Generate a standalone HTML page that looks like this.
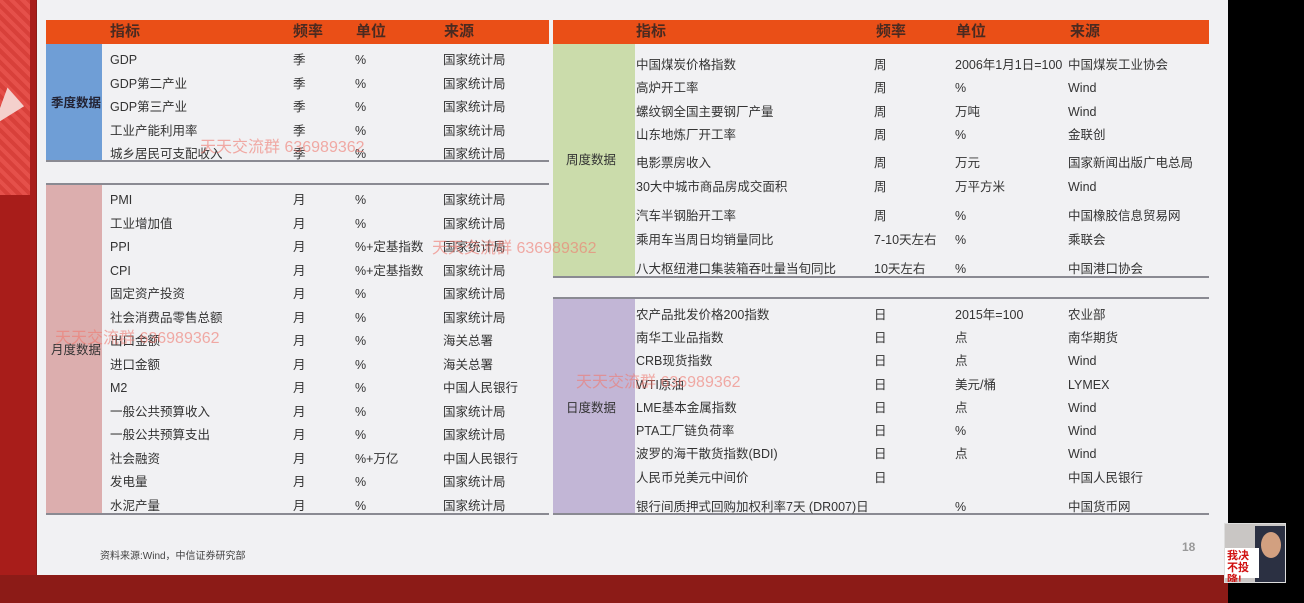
<!DOCTYPE html>
<html><head><meta charset="utf-8"><style>
*{margin:0;padding:0;box-sizing:border-box}
body{width:1304px;height:603px;overflow:hidden;background:#000;position:relative;font-family:"Liberation Sans","Noto Sans CJK SC",sans-serif;}
.a{position:absolute;white-space:nowrap}
.t{font-size:12.5px;color:#333;line-height:16px}
.h{font-size:15px;font-weight:bold;color:#4a2a20;line-height:20px}
.wm{font-size:16px;color:rgba(240,120,110,0.6)}
</style></head><body>
<div class="a" style="left:0;top:0;width:1228px;height:603px;background:#8c1b17"></div>
<div class="a" style="left:0;top:0;width:36px;height:575px;background:#a81d1a"></div>
<div class="a" style="left:0;top:0;width:30px;height:195px;background:repeating-linear-gradient(45deg,#e5504a 0 4px,#d8403a 4px 8px)"></div>
<div class="a" style="left:0;top:90px;width:0;height:0;border-left:22px solid #f4d0cc;border-top:12px solid transparent;border-bottom:28px solid transparent;transform:rotate(20deg)"></div>
<div class="a" style="left:37px;top:0;width:1191px;height:575px;background:#f1f1f3"></div>

<!-- left table -->
<div class="a" style="left:46px;top:20px;width:503px;height:24px;background:#ea4f17"></div>
<div class="a h" style="left:110px;top:22px">指标</div>
<div class="a h" style="left:293px;top:22px">频率</div>
<div class="a h" style="left:356px;top:22px">单位</div>
<div class="a h" style="left:444px;top:22px">来源</div>
<div class="a" style="left:46px;top:44px;width:56px;height:117px;background:#6f9ed6"></div>
<div class="a t" style="left:51px;top:95px;font-weight:bold;color:#223">季度数据</div>
<div class="a" style="left:46px;top:160px;width:503px;height:2px;background:#8a8a92"></div>
<div class="a" style="left:46px;top:183px;width:503px;height:2px;background:#8a8a92"></div>
<div class="a" style="left:46px;top:185px;width:56px;height:329px;background:#dcaeae"></div>
<div class="a t" style="left:51px;top:342px">月度数据</div>
<div class="a" style="left:46px;top:513px;width:503px;height:2px;background:#8a8a92"></div>

<div class="a" style="left:110px;top:52px;width:440px">
<div class="a t" style="top:0">GDP</div><div class="a t" style="left:183px;top:0">季</div><div class="a t" style="left:245px;top:0">%</div><div class="a t" style="left:333px;top:0">国家统计局</div>
<div class="a t" style="top:24px">GDP第二产业</div><div class="a t" style="left:183px;top:24px">季</div><div class="a t" style="left:245px;top:24px">%</div><div class="a t" style="left:333px;top:24px">国家统计局</div>
<div class="a t" style="top:47px">GDP第三产业</div><div class="a t" style="left:183px;top:47px">季</div><div class="a t" style="left:245px;top:47px">%</div><div class="a t" style="left:333px;top:47px">国家统计局</div>
<div class="a t" style="top:71px">工业产能利用率</div><div class="a t" style="left:183px;top:71px">季</div><div class="a t" style="left:245px;top:71px">%</div><div class="a t" style="left:333px;top:71px">国家统计局</div>
<div class="a t" style="top:94px">城乡居民可支配收入</div><div class="a t" style="left:183px;top:94px">季</div><div class="a t" style="left:245px;top:94px">%</div><div class="a t" style="left:333px;top:94px">国家统计局</div>
</div>

<div class="a" style="left:110px;top:192px;width:440px">
<div class="a t" style="top:0">PMI</div><div class="a t" style="left:183px;top:0">月</div><div class="a t" style="left:245px;top:0">%</div><div class="a t" style="left:333px;top:0">国家统计局</div>
<div class="a t" style="top:24px">工业增加值</div><div class="a t" style="left:183px;top:24px">月</div><div class="a t" style="left:245px;top:24px">%</div><div class="a t" style="left:333px;top:24px">国家统计局</div>
<div class="a t" style="top:47px">PPI</div><div class="a t" style="left:183px;top:47px">月</div><div class="a t" style="left:245px;top:47px">%+定基指数</div><div class="a t" style="left:333px;top:47px">国家统计局</div>
<div class="a t" style="top:71px">CPI</div><div class="a t" style="left:183px;top:71px">月</div><div class="a t" style="left:245px;top:71px">%+定基指数</div><div class="a t" style="left:333px;top:71px">国家统计局</div>
<div class="a t" style="top:94px">固定资产投资</div><div class="a t" style="left:183px;top:94px">月</div><div class="a t" style="left:245px;top:94px">%</div><div class="a t" style="left:333px;top:94px">国家统计局</div>
<div class="a t" style="top:118px">社会消费品零售总额</div><div class="a t" style="left:183px;top:118px">月</div><div class="a t" style="left:245px;top:118px">%</div><div class="a t" style="left:333px;top:118px">国家统计局</div>
<div class="a t" style="top:141px">出口金额</div><div class="a t" style="left:183px;top:141px">月</div><div class="a t" style="left:245px;top:141px">%</div><div class="a t" style="left:333px;top:141px">海关总署</div>
<div class="a t" style="top:165px">进口金额</div><div class="a t" style="left:183px;top:165px">月</div><div class="a t" style="left:245px;top:165px">%</div><div class="a t" style="left:333px;top:165px">海关总署</div>
<div class="a t" style="top:188px">M2</div><div class="a t" style="left:183px;top:188px">月</div><div class="a t" style="left:245px;top:188px">%</div><div class="a t" style="left:333px;top:188px">中国人民银行</div>
<div class="a t" style="top:212px">一般公共预算收入</div><div class="a t" style="left:183px;top:212px">月</div><div class="a t" style="left:245px;top:212px">%</div><div class="a t" style="left:333px;top:212px">国家统计局</div>
<div class="a t" style="top:235px">一般公共预算支出</div><div class="a t" style="left:183px;top:235px">月</div><div class="a t" style="left:245px;top:235px">%</div><div class="a t" style="left:333px;top:235px">国家统计局</div>
<div class="a t" style="top:259px">社会融资</div><div class="a t" style="left:183px;top:259px">月</div><div class="a t" style="left:245px;top:259px">%+万亿</div><div class="a t" style="left:333px;top:259px">中国人民银行</div>
<div class="a t" style="top:282px">发电量</div><div class="a t" style="left:183px;top:282px">月</div><div class="a t" style="left:245px;top:282px">%</div><div class="a t" style="left:333px;top:282px">国家统计局</div>
<div class="a t" style="top:306px">水泥产量</div><div class="a t" style="left:183px;top:306px">月</div><div class="a t" style="left:245px;top:306px">%</div><div class="a t" style="left:333px;top:306px">国家统计局</div>
</div>

<!-- right table -->
<div class="a" style="left:553px;top:20px;width:656px;height:24px;background:#ea4f17"></div>
<div class="a h" style="left:636px;top:22px">指标</div>
<div class="a h" style="left:876px;top:22px">频率</div>
<div class="a h" style="left:956px;top:22px">单位</div>
<div class="a h" style="left:1070px;top:22px">来源</div>
<div class="a" style="left:553px;top:44px;width:82px;height:232px;background:#cbdcab"></div>
<div class="a t" style="left:566px;top:152px">周度数据</div>
<div class="a" style="left:553px;top:276px;width:656px;height:2px;background:#8a8a92"></div>
<div class="a" style="left:553px;top:297px;width:656px;height:2px;background:#8a8a92"></div>
<div class="a" style="left:553px;top:299px;width:82px;height:215px;background:#c2b6d6"></div>
<div class="a t" style="left:566px;top:400px">日度数据</div>
<div class="a" style="left:553px;top:513px;width:656px;height:2px;background:#8a8a92"></div>

<div class="a" style="left:636px;top:0;width:580px">
<div class="a t" style="top:57px">中国煤炭价格指数</div><div class="a t" style="left:238px;top:57px">周</div><div class="a t" style="left:319px;top:57px">2006年1月1日=100</div><div class="a t" style="left:432px;top:57px">中国煤炭工业协会</div>
<div class="a t" style="top:80px">高炉开工率</div><div class="a t" style="left:238px;top:80px">周</div><div class="a t" style="left:319px;top:80px">%</div><div class="a t" style="left:432px;top:80px">Wind</div>
<div class="a t" style="top:104px">螺纹钢全国主要钢厂产量</div><div class="a t" style="left:238px;top:104px">周</div><div class="a t" style="left:319px;top:104px">万吨</div><div class="a t" style="left:432px;top:104px">Wind</div>
<div class="a t" style="top:127px">山东地炼厂开工率</div><div class="a t" style="left:238px;top:127px">周</div><div class="a t" style="left:319px;top:127px">%</div><div class="a t" style="left:432px;top:127px">金联创</div>
<div class="a t" style="top:155px">电影票房收入</div><div class="a t" style="left:238px;top:155px">周</div><div class="a t" style="left:319px;top:155px">万元</div><div class="a t" style="left:432px;top:155px">国家新闻出版广电总局</div>
<div class="a t" style="top:179px">30大中城市商品房成交面积</div><div class="a t" style="left:238px;top:179px">周</div><div class="a t" style="left:319px;top:179px">万平方米</div><div class="a t" style="left:432px;top:179px">Wind</div>
<div class="a t" style="top:208px">汽车半钢胎开工率</div><div class="a t" style="left:238px;top:208px">周</div><div class="a t" style="left:319px;top:208px">%</div><div class="a t" style="left:432px;top:208px">中国橡胶信息贸易网</div>
<div class="a t" style="top:232px">乘用车当周日均销量同比</div><div class="a t" style="left:238px;top:232px">7-10天左右</div><div class="a t" style="left:319px;top:232px">%</div><div class="a t" style="left:432px;top:232px">乘联会</div>
<div class="a t" style="top:261px">八大枢纽港口集装箱吞吐量当旬同比</div><div class="a t" style="left:238px;top:261px">10天左右</div><div class="a t" style="left:319px;top:261px">%</div><div class="a t" style="left:432px;top:261px">中国港口协会</div>

<div class="a t" style="top:307px">农产品批发价格200指数</div><div class="a t" style="left:238px;top:307px">日</div><div class="a t" style="left:319px;top:307px">2015年=100</div><div class="a t" style="left:432px;top:307px">农业部</div>
<div class="a t" style="top:330px">南华工业品指数</div><div class="a t" style="left:238px;top:330px">日</div><div class="a t" style="left:319px;top:330px">点</div><div class="a t" style="left:432px;top:330px">南华期货</div>
<div class="a t" style="top:353px">CRB现货指数</div><div class="a t" style="left:238px;top:353px">日</div><div class="a t" style="left:319px;top:353px">点</div><div class="a t" style="left:432px;top:353px">Wind</div>
<div class="a t" style="top:377px">WTI原油</div><div class="a t" style="left:238px;top:377px">日</div><div class="a t" style="left:319px;top:377px">美元/桶</div><div class="a t" style="left:432px;top:377px">LYMEX</div>
<div class="a t" style="top:400px">LME基本金属指数</div><div class="a t" style="left:238px;top:400px">日</div><div class="a t" style="left:319px;top:400px">点</div><div class="a t" style="left:432px;top:400px">Wind</div>
<div class="a t" style="top:423px">PTA工厂链负荷率</div><div class="a t" style="left:238px;top:423px">日</div><div class="a t" style="left:319px;top:423px">%</div><div class="a t" style="left:432px;top:423px">Wind</div>
<div class="a t" style="top:446px">波罗的海干散货指数(BDI)</div><div class="a t" style="left:238px;top:446px">日</div><div class="a t" style="left:319px;top:446px">点</div><div class="a t" style="left:432px;top:446px">Wind</div>
<div class="a t" style="top:470px">人民币兑美元中间价</div><div class="a t" style="left:238px;top:470px">日</div><div class="a t" style="left:432px;top:470px">中国人民银行</div>
<div class="a t" style="top:499px">银行间质押式回购加权利率7天 (DR007)日</div><div class="a t" style="left:319px;top:499px">%</div><div class="a t" style="left:432px;top:499px">中国货币网</div>
</div>

<div class="a wm" style="left:200px;top:133px">天天交流群 636989362</div>
<div class="a wm" style="left:432px;top:234px">天天交流群 636989362</div>
<div class="a wm" style="left:55px;top:324px">天天交流群 636989362</div>
<div class="a wm" style="left:576px;top:368px">天天交流群 636989362</div>

<div class="a" style="left:100px;top:547px;font-size:10px;color:#444">资料来源:Wind，中信证券研究部</div>
<div class="a" style="left:1182px;top:540px;font-size:12px;color:#999;font-weight:bold">18</div>

<div class="a" style="left:1224px;top:523px;width:62px;height:60px;background:#c9c6c4;border:1px solid #ddd;overflow:hidden">
<div class="a" style="left:30px;top:2px;width:32px;height:58px;background:#2b3042"></div>
<div class="a" style="left:36px;top:8px;width:20px;height:26px;border-radius:50%;background:#d2a080"></div>
<div class="a" style="left:0;top:24px;width:34px;height:30px;background:#fff;color:#d01010;font-size:11px;font-weight:bold;line-height:12px;padding:2px;white-space:normal">我决不投降!</div>
</div>
</body></html>
